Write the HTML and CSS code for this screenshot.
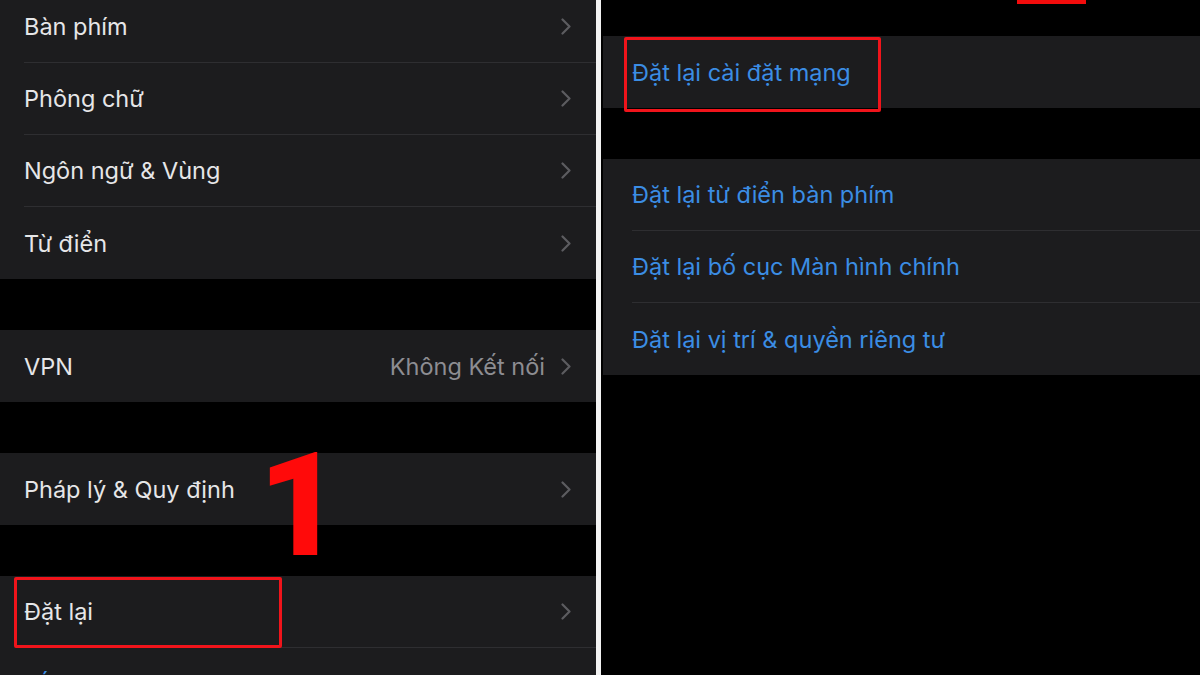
FILE: index.html
```html
<!DOCTYPE html>
<html lang="vi">
<head>
<meta charset="utf-8">
<title>Cài đặt</title>
<link rel="stylesheet" href="styles.css">
</head>
<body>
<div class="screen">
  <section class="panel left">
    <div class="group first">
      <div class="row"><span class="label">Bàn phím</span><span class="trail"><svg class="chev" viewBox="0 0 10 17"><path d="M1.5 1.5 L8.5 8.5 L1.5 15.5"/></svg></span></div>
      <div class="row"><span class="label">Phông chữ</span><span class="trail"><svg class="chev" viewBox="0 0 10 17"><path d="M1.5 1.5 L8.5 8.5 L1.5 15.5"/></svg></span></div>
      <div class="row"><span class="label">Ngôn ngữ &amp; Vùng</span><span class="trail"><svg class="chev" viewBox="0 0 10 17"><path d="M1.5 1.5 L8.5 8.5 L1.5 15.5"/></svg></span></div>
      <div class="row"><span class="label">Từ điển</span><span class="trail"><svg class="chev" viewBox="0 0 10 17"><path d="M1.5 1.5 L8.5 8.5 L1.5 15.5"/></svg></span></div>
    </div>
    <div class="group">
      <div class="row"><span class="label">VPN</span><span class="trail"><span class="value">Không Kết nối</span><svg class="chev" viewBox="0 0 10 17"><path d="M1.5 1.5 L8.5 8.5 L1.5 15.5"/></svg></span></div>
    </div>
    <div class="group">
      <div class="row"><span class="label">Pháp lý &amp; Quy định</span><span class="trail"><svg class="chev" viewBox="0 0 10 17"><path d="M1.5 1.5 L8.5 8.5 L1.5 15.5"/></svg></span></div>
    </div>
    <div class="group">
      <div class="row"><span class="label">Đặt lại</span><span class="trail"><svg class="chev" viewBox="0 0 10 17"><path d="M1.5 1.5 L8.5 8.5 L1.5 15.5"/></svg></span><span class="hl hl-reset"></span></div>
      <div class="row"><span class="label blue">Tắt máy</span></div>
    </div>
    <span class="step step-1">1</span>
  </section>
  <div class="divider"></div>
  <section class="panel right">
    <div class="group top">
      <div class="row"><span class="label blue">Đặt lại cài đặt mạng</span><span class="hl hl-network"></span></div>
    </div>
    <div class="group">
      <div class="row"><span class="label blue">Đặt lại từ điển bàn phím</span></div>
      <div class="row"><span class="label blue">Đặt lại bố cục Màn hình chính</span></div>
      <div class="row"><span class="label blue">Đặt lại vị trí &amp; quyền riêng tư</span></div>
    </div>
    <span class="step-2-tail"></span>
  </section>
</div>
</body>
</html>
```

FILE: styles.css
```css
* { box-sizing: border-box; }
html, body {
  margin: 0;
  padding: 0;
  background: #000;
}
body {
  width: 1200px;
  height: 675px;
  overflow: hidden;
  font-family: Inter, "Noto Sans", "Liberation Sans", sans-serif;
}
.screen {
  display: flex;
  width: 1200px;
  height: 675px;
  overflow: hidden;
}
.panel {
  position: relative;
  background: #000;
  display: flex;
  flex-direction: column;
  gap: 51px;
}
.left { width: 596px; }
.divider { width: 5px; background: #f2f2f2; flex: none; }
.right { flex: 1; padding-left: 2px; }
.group { background: #1c1c1e; }
.left .group.first { margin-top: -9px; }
.right .group.top { margin-top: 36px; }
.row {
  position: relative;
  height: 72px;
  display: flex;
  align-items: center;
  justify-content: space-between;
  margin-left: 24px;
  padding-right: 25px;
  border-bottom: 1px solid #2e2e31;
}
.right .row { margin-left: 29px; }
.group .row:last-child { border-bottom: none; }
.label {
  font-size: 23.5px;
  color: #e6e6e8;
}
.label.blue { color: #3b8de4; }
.trail {
  display: flex;
  align-items: center;
  gap: 16px;
}
.value { font-size: 23.5px; color: #8d8d92; }
.chev {
  width: 10px;
  height: 17px;
  fill: none;
  stroke: #5c5c60;
  stroke-width: 2.2;
  stroke-linecap: round;
  stroke-linejoin: round;
}
.hl {
  position: absolute;
  border: 3px solid #f0141b;
  border-radius: 2px;
}
.hl-reset { left: -10px; top: 1px; width: 268px; height: 71px; }
.hl-network { left: -8px; top: 1px; width: 257px; height: 75px; }
.step {
  position: absolute;
  font-family: Roboto, "Liberation Sans", sans-serif;
  font-weight: 900;
  color: #ff0a0a;
  line-height: 1;
}
.step-1 { font-size: 145px; left: 258px; top: 433px; }
.step-2-tail {
  position: absolute;
  left: 416px;
  top: 0;
  width: 69px;
  height: 4px;
  background: #f20c0c;
}
```
